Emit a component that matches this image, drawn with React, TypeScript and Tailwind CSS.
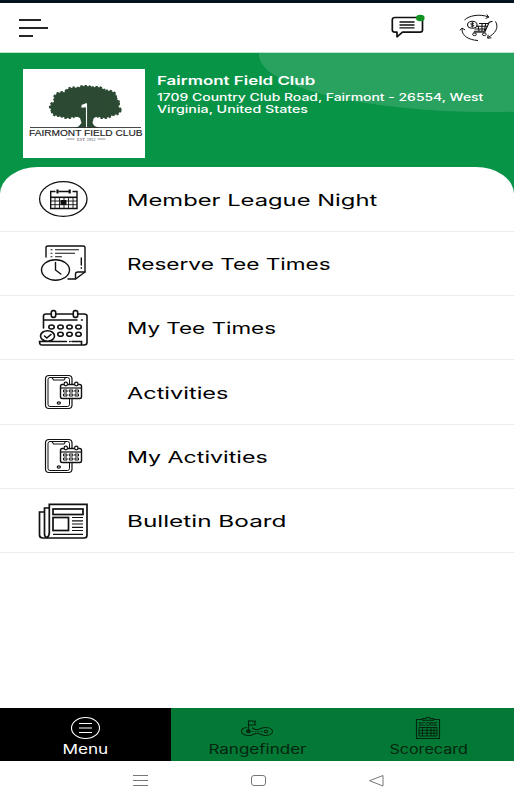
import React from "react";
import clsx from "clsx";

type IconProps = { className?: string };

type MenuItem = {
  label: string;
  icon: React.ComponentType<IconProps>;
  stretch: string;
};

function ChatIcon() {
  return (
    <svg width="36" height="28" viewBox="0 0 36 28" fill="none" stroke="#111" strokeWidth="1.7" strokeLinejoin="round">
      <path d="M6 5.5h25q2.500 0 2.500 2.200v10.300q0 2.200-2.500 2.200H13.500L8 24.800V20.200H6q-2.700 0-2.700-2.200V7.700q0-2.200 2.700-2.200z" />
      <path d="M10.500 10h15M10.500 13h15M10.500 15.800h15" strokeWidth="1.300" />
      <ellipse cx="31.300" cy="6" rx="4.300" ry="3.200" fill="#129321" stroke="none" />
    </svg>
  );
}

function CartIcon() {
  return (
    <svg width="40" height="30" viewBox="0 0 40 30" fill="none" stroke="#111" strokeWidth="1">
      <path d="M5.500 8C10 3.500 21 1.500 29.500 5M27.800 2.500l2 2.700-3.200 1.200" />
      <path d="M36.500 9.500c4 6.500-1 12.500-7.500 16M29.200 22.800l-.6 3.400 3.800-.4" />
      <path d="M19 28.500C10 28 2.500 24 3 16.500M.8 18.300L3 16.100l3 1.800" />
      <path d="M33.500 9.300l-3.300 1-4 9H15M29.500 11.500H20M28.700 14.300H17M27.500 17H15.500M19 13.500l1 5.500M23 11v8M26.700 11l-1.200 8" strokeWidth="1.100" />
      <ellipse cx="13.300" cy="12.800" rx="4.800" ry="3.500" strokeWidth="1.100" />
      <path d="M15 11.400q-3.200-1-3.200.4t1.700 1q2 .3 1.300 1.200-.9.800-3 .1M13.400 10v5.500" strokeWidth=".9" />
      <ellipse cx="15.500" cy="22.300" rx="1.900" ry="1.300" />
      <ellipse cx="25.300" cy="22.300" rx="1.900" ry="1.300" />
      <path d="M14.500 20.300h12" strokeWidth=".8" />
    </svg>
  );
}

// Leaf clusters of the oak crown: cx, cy, rx, ry
const CROWN = [
  [35, 38, 8, 6],
  [40, 29, 9, 6],
  [51, 24, 9, 5.5],
  [62, 22, 9, 5],
  [73, 23, 9, 5],
  [84, 27, 9, 5.5],
  [88, 34, 8, 6],
  [90, 41, 7.5, 5],
  [81, 44, 9, 5],
  [45, 44, 9, 5],
  [36, 43, 7, 4],
  [55, 41, 9, 6],
  [72, 41, 9, 6],
  [62, 33, 22, 13],
];

function ClubLogo() {
  return (
    <svg width="122" height="89" viewBox="0 0 122 89" className="bg-white">
      <g fill="#2c4a33" stroke="#2c4a33" strokeWidth="2.200" strokeDasharray="2.300 1.800">
        {CROWN.map(([cx, cy, rx, ry], i) => (
          <ellipse key={i} cx={cx} cy={cy} rx={rx} ry={ry} />
        ))}
      </g>
      <path d="M50 46l7 3 1.500 5-3 3.500-5 1.500h26l-5-2-2-3 1-4.500 6-4z" fill="#2c4a33" />
      <path d="M63.500 34.500V59" stroke="#fff" strokeWidth="1.100" />
      <path d="M63.500 34l-5 2v2.800l5-.5z" fill="#fff" />
      <path d="M7 58.500h111" stroke="#333" strokeWidth=".9" />
      <text x="6" y="66.700" textLength="113.500" lengthAdjust="spacingAndGlyphs" fontSize="8.300" fill="#222" stroke="#222" strokeWidth=".15" fontFamily="Liberation Sans, Arial, sans-serif">
        FAIRMONT FIELD CLUB
      </text>
      <path d="M43.500 70h8M74.500 70h8" stroke="#777" strokeWidth=".8" />
      <text x="54" y="71.500" textLength="18.500" lengthAdjust="spacingAndGlyphs" fontSize="4.200" fill="#444" fontFamily="Liberation Serif, serif">
        EST. 1912
      </text>
    </svg>
  );
}

function LeagueIcon({ className }: IconProps) {
  return (
    <svg className={className} viewBox="0 0 60 64" fill="none" stroke="#111">
      <ellipse cx="30.300" cy="32" rx="23.700" ry="17.300" strokeWidth="1.300" />
      <path d="M22.500 24.500H17.700V41.500H44V24.500H39.500M25.500 24.500h11" strokeWidth="1.400" />
      <path d="M24.500 22.500v4M36.700 22.500v4" strokeWidth="2.200" />
      <path d="M17.700 30.300H44" strokeWidth="1.600" />
      <path d="M17.700 34H44M17.700 37.700H44M22 30v11.500M26.500 30v11.500M31 30v11.500M35.500 30v11.500M40 30v11.500" strokeWidth=".9" />
      <path d="M28 33.500h5v4h-5z" fill="#111" />
    </svg>
  );
}

function ReserveIcon({ className }: IconProps) {
  return (
    <svg className={className} viewBox="0 0 60 64" fill="none" stroke="#111" strokeWidth="1.400" strokeLinecap="round">
      <path d="M13 26V16.500q0-1.500 2-1.500h35q2 0 2 1.500V41l-9.500 7H35" />
      <path d="M42.500 47.500V43q0-2 2.500-2h7M48.300 27v7M48.300 36.800v.4" />
      <path d="M22.500 18.700h23M22.500 22.300h19M22.500 25.800h6" strokeWidth="1.100" />
      <path d="M18 18.700h1M18 22.300h1M18 25.800h1" strokeWidth="1.100" />
      <ellipse cx="22.500" cy="39" rx="14" ry="10.200" />
      <path d="M22.500 31.500V39l5.300 4" />
    </svg>
  );
}

function TeeTimesIcon({ className }: IconProps) {
  return (
    <svg className={className} viewBox="0 0 60 64" fill="none" stroke="#111" strokeWidth="1.600" strokeLinecap="round">
      <path d="M10.500 32V20q0-2 2.500-2h5M23 18h17M45 18h6q3 0 3 2v26.500q0 2.500-3 2.500H9q-2.500 0-2.500-3.500h27M39 45.500h9.500V49" />
      <path d="M11 24h33M48.500 24h.8M36.700 45.500h.4" />
      <rect x="18.300" y="14.600" width="4.400" height="6.800" rx="1.800" />
      <rect x="40.300" y="14.600" width="4.400" height="6.800" rx="1.800" />
      {[18.5, 27.5, 36.5, 45.5].map((x) => (
        <ellipse key={x} cx={x} cy="31" rx="2.700" ry="2" />
      ))}
      {[27.5, 36.5, 45.5].map((x) => (
        <ellipse key={x} cx={x} cy="38.200" rx="2.700" ry="2" />
      ))}
      <ellipse cx="14.500" cy="40" rx="7" ry="5.300" fill="#fff" />
      <path d="M11.500 40l2.300 2 4.200-3.500" />
    </svg>
  );
}

function ActivitiesIcon({ className }: IconProps) {
  return (
    <svg className={className} viewBox="0 0 60 64" fill="none" stroke="#111" strokeWidth="1.200">
      <rect x="12.500" y="15.500" width="26.500" height="33" rx="3.500" />
      <rect x="15" y="17.500" width="21.500" height="29" rx="2" strokeWidth="1" />
      <path d="M19 17.500l1.500 2.500h10.500l1.500-2.500" strokeWidth="1.100" />
      <ellipse cx="25.800" cy="43" rx="1.600" ry="1.200" />
      <rect x="27.500" y="24.500" width="21" height="14" rx="1.800" fill="#fff" strokeWidth="1.400" />
      <path d="M27.500 28H48.500" />
      <ellipse cx="32.800" cy="24" rx="1.700" ry="1.800" fill="#fff" />
      <ellipse cx="43.300" cy="24" rx="1.700" ry="1.800" fill="#fff" />
      <g strokeWidth="1">
        <path d="M30.500 30h3.500v2h-3.500zM36.300 30h3.500v2h-3.500zM42 30h3.500v2H42z" />
        <path d="M30.500 34h3.500v2h-3.500zM36.300 34h3.500v2h-3.500zM42 34h3.500v2H42z" />
      </g>
    </svg>
  );
}

function BulletinIcon({ className }: IconProps) {
  return (
    <svg className={className} viewBox="0 0 60 64" fill="none" stroke="#111" strokeWidth="1.700">
      <path d="M16.300 44.500V15.300H54v31q0 2.700-3 2.700H10q-3.500 0-3.500-3V23h5" />
      <path d="M16.300 19h-4.800v26q0 3.500 3.500 3.500M16.300 44q0 3-2 4.500" />
      <rect x="20" y="20" width="30" height="5.500" />
      <rect x="20" y="28.500" width="15.500" height="13" />
      <path d="M39 28.500h11M39 31.800h11M39 35h11M39 38.300h11M39 41.500h11M20 45.300h30" strokeWidth="1.200" />
    </svg>
  );
}

const MENU_ITEMS: MenuItem[] = [
  { label: "Member League Night", icon: LeagueIcon, stretch: "scale-x-[1.44]" },
  { label: "Reserve Tee Times", icon: ReserveIcon, stretch: "scale-x-[1.37]" },
  { label: "My Tee Times", icon: TeeTimesIcon, stretch: "scale-x-[1.36]" },
  { label: "Activities", icon: ActivitiesIcon, stretch: "scale-x-[1.425]" },
  { label: "My Activities", icon: ActivitiesIcon, stretch: "scale-x-[1.405]" },
  { label: "Bulletin Board", icon: BulletinIcon, stretch: "scale-x-[1.475]" },
];

function MenuTabIcon() {
  return (
    <svg width="30" height="24" viewBox="0 0 30 24" fill="none" stroke="#fff" strokeWidth="1.100">
      <ellipse cx="14.500" cy="12" rx="14" ry="10.500" />
      <path d="M8 7.500h13M8 12h13M8 16.500h13" strokeWidth="1" />
    </svg>
  );
}

function RangefinderIcon() {
  return (
    <svg width="34" height="24" viewBox="0 0 34 24" fill="none" stroke="#04250f" strokeWidth="1.100">
      <path d="M8.500 15V4.500M8.500 4.800l7 .4-1 1.800 1 1.800-7 .3" />
      <path d="M7 11.500c-3.500.2-5.500 2-5.500 4s3 4 7 4c5 0 5.500-2.200 8.500-2.200s4 2.200 8.500 2.200c4 0 7-1.700 7-4s-3-4-7-4c-4.500 0-5.500 2.300-8.500 2.300-2.500 0-3.500-1.300-5-2" />
      <ellipse cx="8.500" cy="15.300" rx="1.900" ry="1.400" fill="#04250f" />
      <ellipse cx="26" cy="15.500" rx="1.700" ry="1.300" />
      <path d="M12 15.500h11" strokeDasharray="1.500 1.500" strokeWidth=".9" />
    </svg>
  );
}

function ScorecardIcon() {
  return (
    <svg width="26" height="24" viewBox="0 0 26 24" fill="none" stroke="#04250f" strokeWidth="1.100">
      <path d="M7.500 3.500H1.500v19h23v-19H18.500M7.500 4.300V2.500H11l1-1.300h2l1 1.300h3.500v1.800z" />
      <text x="3.500" y="9.500" textLength="19" lengthAdjust="spacingAndGlyphs" fontSize="4.800" fontWeight="bold" fill="#04250f" stroke="none" fontFamily="Liberation Sans, Arial, sans-serif">
        SCORE
      </text>
      <path d="M4 11.500h18v8.500H4zM4 14.300h18M4 17.200h18M7.500 11.500V20M12 11.500V20M16 11.500V20M19 11.500V20" strokeWidth="1" />
    </svg>
  );
}

const TABS = [
  { label: "Menu", icon: MenuTabIcon, active: true, stretch: "scale-x-[1.32]" },
  { label: "Rangefinder", icon: RangefinderIcon, active: false, stretch: "scale-x-[1.31]" },
  { label: "Scorecard", icon: ScorecardIcon, active: false, stretch: "scale-x-[1.24]" },
];

function TopBar() {
  return (
    <header className="flex h-[49px] items-start justify-between bg-white pl-[19px] pr-[15px]">
      <button aria-label="Open menu" className="mt-4 flex flex-col gap-1.5">
        <span className="h-0.5 w-[22px] bg-neutral-800" />
        <span className="h-0.5 w-[29px] bg-neutral-800" />
        <span className="h-0.5 w-[14px] bg-neutral-800" />
      </button>
      <div className="flex items-start gap-[34px] pt-[9px]">
        <ChatIcon />
        <CartIcon />
      </div>
    </header>
  );
}

function ClubBanner() {
  return (
    <section className="relative h-[115px] overflow-hidden border-t border-[#b9e5cb] bg-[#089447]">
      <div className="absolute -top-[56px] left-[259px] h-[115px] w-[460px] rounded-[50%] bg-[#2aa25f]" />
      <div className="relative flex pl-[23px] pt-4">
        <ClubLogo />
        <div className="ml-3 pt-1 text-white">
          <h1 className="origin-left scale-x-[1.41] whitespace-nowrap text-[12px] font-semibold leading-4">
            Fairmont Field Club
          </h1>
          <address className="mt-[3px] whitespace-nowrap text-[10.500px] font-medium not-italic leading-3">
            <span className="block origin-left scale-x-[1.328]">1709 Country Club Road, Fairmont - 26554, West</span>
            <span className="block origin-left scale-x-[1.358]">Virginia, United States</span>
          </address>
        </div>
      </div>
    </section>
  );
}

export default function App() {
  return (
    <div className="flex h-[800px] w-[514px] flex-col overflow-hidden bg-white font-['Inter',sans-serif]">
      <div className="h-[3px] shrink-0 bg-[#02121f]" />
      <TopBar />
      <ClubBanner />

      <main className="min-h-0 flex-1 bg-[linear-gradient(#089447_40px,#fff_40px)]">
        <ul className="h-full bg-white pt-[0.500px] [border-radius:38px_38px_0_0/27px_27px_0_0]">
          {MENU_ITEMS.map(({ label, icon: Icon, stretch }) => (
            <li key={label} className="flex h-[64.300px] items-center border-b border-[#ececec] pl-[33px]">
              <Icon className="h-16 w-[60px] shrink-0" />
              <span className={clsx("ml-[34px] origin-left whitespace-nowrap pt-px text-[16.500px] leading-6 text-black", stretch)}>
                {label}
              </span>
            </li>
          ))}
        </ul>
      </main>

      <nav className="grid h-[53px] shrink-0 grid-cols-3 bg-[#047835]">
        {TABS.map(({ label, icon: Icon, active, stretch }) => (
          <button
            key={label}
            className={clsx("flex flex-col items-center pt-2", active ? "bg-black text-white" : "text-[#04250f]")}
          >
            <Icon />
            <span className={clsx("pt-px text-[13px] leading-[17px]", stretch)}>{label}</span>
          </button>
        ))}
      </nav>

      <div className="flex h-[39px] shrink-0 items-center justify-between bg-white pl-[132px] pr-[129px]">
        <svg width="17" height="14" viewBox="0 0 17 14" stroke="#777" strokeWidth="1">
          <path d="M1 1.500h15M1 6.500h15M1 11.500h15" />
        </svg>
        <svg width="17" height="14" viewBox="0 0 17 14" fill="none" stroke="#777" strokeWidth="1">
          <rect x="1.500" y="1.500" width="14" height="10" rx="2.500" />
        </svg>
        <svg width="17" height="14" viewBox="0 0 17 14" fill="none" stroke="#777" strokeWidth="1" strokeLinejoin="round">
          <path d="M15 1.500v10.500L1.500 6.700z" />
        </svg>
      </div>
    </div>
  );
}
